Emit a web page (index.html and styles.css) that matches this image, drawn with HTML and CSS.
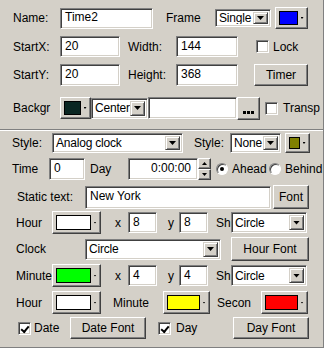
FILE: index.html
```html
<!DOCTYPE html>
<html lang="en">
<head>
  <meta charset="UTF-8">
  <title>Clock properties</title>
  <link rel="stylesheet" href="styles.css">
</head>
<body>
  <div class="panel">
    <div class="row r1">
      <span class="lbl w47">Name:</span>
      <div class="edit sunken w93">Time2</div>
      <span class="lbl ml13 w49">Frame</span>
      <div class="combo sunken w56 h18"><span class="val">Single</span><span class="drop"></span></div>
      <div class="cbtn raised ml4 w33 h22"><span class="swatch blue"></span><span class="arr"></span></div>
    </div>

    <div class="row r2">
      <span class="lbl w47">StartX:</span>
      <div class="edit sunken w60">20</div>
      <span class="lbl ml8 w48">Width:</span>
      <div class="edit sunken w62">144</div>
      <span class="check sunken ml18"></span>
      <span class="lbl ml4">Lock</span>
    </div>

    <div class="row r3">
      <span class="lbl w47">StartY:</span>
      <div class="edit sunken w60 h22">20</div>
      <span class="lbl ml8 w48">Height:</span>
      <div class="edit sunken w62 h22">368</div>
      <div class="btn raised ml16 w54 h22">Timer</div>
    </div>

    <div class="row r4">
      <span class="lbl clip w39">Backgr</span>
      <div class="cbtn raised ml8 w31 h22"><span class="swatch dark"></span><span class="arr"></span></div>
      <div class="combo sunken w57"><span class="val">Center</span><span class="drop"></span></div>
      <div class="edit sunken w89 h22"></div>
      <div class="btn raised dots w23 h23">
        <svg width="11" height="3" viewBox="0 0 11 3"><rect x="0" y="0" width="3" height="3"/><rect x="4" y="0" width="3" height="3"/><rect x="8" y="0" width="3" height="3"/></svg>
      </div>
      <span class="check sunken ml5"></span>
      <span class="lbl ml5">Transp</span>
    </div>

    <div class="sep"></div>

    <div class="row r5">
      <span class="lbl w40">Style:</span>
      <div class="combo sunken w131 h20"><span class="val">Analog clock</span><span class="drop"></span></div>
      <span class="lbl ml11 w36">Style:</span>
      <div class="combo sunken w51 h20"><span class="val">None</span><span class="drop"></span></div>
      <div class="cbtn raised ml4 w25 h20"><span class="swatch olive"></span><span class="arr"></span></div>
    </div>

    <div class="row r6">
      <span class="lbl w37">Time</span>
      <div class="edit sunken w36 h22">0</div>
      <span class="lbl ml5 w38">Day</span>
      <div class="edit sunken w70 h22 right">0:00:00</div>
      <div class="spin">
        <span class="raised up"></span>
        <span class="raised down"></span>
      </div>
      <span class="radio on ml5"></span>
      <span class="lbl ml4 w33">Ahead</span>
      <span class="radio ml4"></span>
      <span class="lbl ml4">Behind</span>
    </div>

    <div class="row r7">
      <span class="lbl w68">Static text:</span>
      <div class="edit sunken w186 h23">New York</div>
      <div class="btn raised ml2 w36 h24">Font</div>
    </div>

    <div class="row r8">
      <span class="lbl w36">Hour</span>
      <div class="cbtn raised w49 h23"><span class="swatch white"></span><span class="arr"></span></div>
      <span class="lbl ml14 w13">x</span>
      <div class="edit sunken w29">8</div>
      <span class="lbl ml11 w11">y</span>
      <div class="edit sunken w29">8</div>
      <span class="lbl ml8 w15">Sh</span>
      <div class="combo sunken w76"><span class="val">Circle</span><span class="drop"></span></div>
    </div>

    <div class="row r9">
      <span class="lbl w69">Clock</span>
      <div class="combo sunken w136"><span class="val">Circle</span><span class="drop"></span></div>
      <div class="btn raised ml10 w78 h24">Hour Font</div>
    </div>

    <div class="row r10">
      <span class="lbl w36">Minute</span>
      <div class="cbtn raised w49 h23"><span class="swatch green"></span><span class="arr"></span></div>
      <span class="lbl ml14 w13">x</span>
      <div class="edit sunken w29">4</div>
      <span class="lbl ml11 w11">y</span>
      <div class="edit sunken w29">4</div>
      <span class="lbl ml8 w15">Sh</span>
      <div class="combo sunken w76"><span class="val">Circle</span><span class="drop"></span></div>
    </div>

    <div class="row r11">
      <span class="lbl w36">Hour</span>
      <div class="cbtn raised w49 h23"><span class="swatch white"></span><span class="arr"></span></div>
      <span class="lbl ml12 w50">Minute</span>
      <div class="cbtn raised w47 h23"><span class="swatch yellow"></span><span class="arr"></span></div>
      <span class="lbl clip ml7 w35">Secon</span>
      <div class="cbtn raised ml9 w47 h23"><span class="swatch red"></span><span class="arr"></span></div>
    </div>

    <div class="row r12">
      <span class="check sunken on"></span>
      <span class="lbl ml3 w36">Date</span>
      <div class="btn raised w76 h22">Date Font</div>
      <span class="check sunken on ml12"></span>
      <span class="lbl ml5 w57">Day</span>
      <div class="btn raised w76 h22">Day Font</div>
    </div>
  </div>
</body>
</html>
```

FILE: styles.css
```css
* {
  box-sizing: border-box;
}
body {
  margin: 0;
  background: #fff;
  font-family: 'Liberation Sans', Arial, sans-serif;
  font-size: 12px;
  color: #000;
}
.panel {
  width: 324px;
  height: 348px;
  background: #d4d0c8;
  border-right: 1px solid #808080;
  border-bottom: 1px solid #808080;
  overflow: hidden;
}

/* rows */
.row {
  display: flex;
  align-items: center;
  white-space: nowrap;
}
.r1 { margin-top: 7px; height: 22px; padding-left: 13px; }
.r2 { margin-top: 7px; height: 21px; padding-left: 13px; }
.r3 { margin-top: 7px; height: 22px; padding-left: 13px; }
.r4 { margin-top: 11px; height: 22px; padding-left: 13px; }
.r5 { margin-top: 2px; height: 20px; padding-left: 12px; }
.r6 { margin-top: 5px; height: 22px; padding-left: 12px; }
.r7 { margin-top: 5px; height: 24px; padding-left: 17px; }
.r8 { margin-top: 2px; height: 23px; padding-left: 16px; }
.r9 { margin-top: 3px; height: 24px; padding-left: 16px; }
.r10 { margin-top: 3px; height: 23px; padding-left: 16px; }
.r11 { margin-top: 4px; height: 23px; padding-left: 16px; }
.r12 { margin-top: 3px; height: 22px; padding-left: 18px; }

.sep {
  margin-top: 10px;
  height: 2px;
  border-top: 1px solid #808080;
  border-bottom: 1px solid #fff;
}

/* sizes */
.w11 { width: 11px; } .w13 { width: 13px; } .w15 { width: 15px; }
.w23 { width: 23px; } .w25 { width: 25px; } .w29 { width: 29px; }
.w31 { width: 31px; } .w33 { width: 33px; } .w35 { width: 35px; }
.w36 { width: 36px; } .w37 { width: 37px; } .w38 { width: 38px; }
.w39 { width: 39px; } .w40 { width: 40px; } .w47 { width: 47px; }
.w48 { width: 48px; } .w49 { width: 49px; } .w50 { width: 50px; }
.w51 { width: 51px; } .w54 { width: 54px; } .w56 { width: 56px; }
.w57 { width: 57px; } .w60 { width: 60px; } .w62 { width: 62px; }
.w68 { width: 68px; } .w69 { width: 69px; } .w70 { width: 70px; }
.w76 { width: 76px; } .w78 { width: 78px; } .w89 { width: 89px; }
.w93 { width: 93px; } .w131 { width: 131px; } .w136 { width: 136px; }
.w186 { width: 186px; }
.h18 { height: 18px !important; } .h20 { height: 20px !important; }
.h22 { height: 22px !important; } .h23 { height: 23px !important; }
.h24 { height: 24px !important; }
.ml2 { margin-left: 2px; } .ml3 { margin-left: 3px; }
.ml4 { margin-left: 4px; } .ml5 { margin-left: 5px; }
.ml7 { margin-left: 7px; } .ml8 { margin-left: 8px; } .ml9 { margin-left: 9px; }
.ml10 { margin-left: 10px; } .ml11 { margin-left: 11px; } .ml12 { margin-left: 12px; }
.ml13 { margin-left: 13px; } .ml14 { margin-left: 14px; } .ml16 { margin-left: 16px; }
.ml18 { margin-left: 18px; }

/* controls */
.lbl {
  flex: none;
}
.clip {
  overflow: hidden;
}
.sunken {
  background: #fff;
  border: 1px solid;
  border-color: #808080 #fff #fff #808080;
  box-shadow: inset 1px 1px #404040, inset -1px -1px #d4d0c8;
}
.raised {
  background: #d4d0c8;
  border: 1px solid;
  border-color: #fff #404040 #404040 #fff;
  box-shadow: inset -1px -1px #808080;
}
.edit {
  flex: none;
  height: 21px;
  display: flex;
  align-items: center;
  padding: 0 3px 2px 4px;
}
.edit.right {
  justify-content: flex-end;
  padding-right: 6px;
}
.combo {
  flex: none;
  height: 21px;
  display: flex;
  align-items: stretch;
  padding: 2px;
}
.combo .val {
  flex: 1;
  display: flex;
  align-items: center;
  padding-left: 1px;
  overflow: hidden;
  letter-spacing: -0.2px;
}
.drop {
  width: 15px;
  flex: none;
  display: flex;
  align-items: center;
  justify-content: center;
  background: #d4d0c8;
  border: 1px solid;
  border-color: #d4d0c8 #404040 #404040 #d4d0c8;
  box-shadow: inset 1px 1px #fff, inset -1px -1px #808080;
}
.drop::after {
  content: "";
  width: 7px;
  height: 4px;
  background: #000;
  clip-path: polygon(0 0, 100% 0, 50% 100%);
}
.btn {
  flex: none;
  display: flex;
  align-items: center;
  justify-content: center;
}
.dots {
  align-items: flex-end;
  padding-bottom: 5px;
}
.cbtn {
  flex: none;
  display: flex;
  align-items: stretch;
  padding: 3px 2px 3px 3px;
}
.swatch {
  flex: 1;
  border: 1px solid #000;
}
.arr {
  width: 6px;
  flex: none;
  display: flex;
  align-items: center;
  justify-content: center;
  margin-left: 1px;
}
.arr::after {
  content: "";
  width: 3px;
  height: 2px;
  background: #000;
  clip-path: polygon(0 0, 100% 0, 50% 100%);
}
.blue { background: #0000ff; }
.dark { background: #0a2622; }
.olive { background: #808000; }
.white { background: #fff; }
.green { background: #00ff00; }
.yellow { background: #ffff00; }
.red { background: #ff0000; }

.check {
  flex: none;
  width: 13px;
  height: 13px;
  position: relative;
}
.check.on::after {
  content: "";
  position: absolute;
  left: 2px;
  top: 1px;
  width: 6px;
  height: 3px;
  border-left: 2px solid #000;
  border-bottom: 2px solid #000;
  transform: translate(0, 2px) rotate(-50deg);
}
.radio {
  flex: none;
  width: 12px;
  height: 12px;
  border-radius: 50%;
  background: #fff;
  border: 1px solid;
  border-color: #808080 #fff #fff #808080;
  box-shadow: inset 1px 1px #404040;
  display: flex;
  align-items: center;
  justify-content: center;
}
.radio.on::after {
  content: "";
  width: 4px;
  height: 4px;
  border-radius: 50%;
  background: #000;
}
.spin {
  flex: none;
  width: 13px;
  height: 22px;
  display: flex;
  flex-direction: column;
}
.spin span {
  flex: 1;
  display: flex;
  align-items: center;
  justify-content: center;
}
.spin .up::after,
.spin .down::after {
  content: "";
  width: 5px;
  height: 3px;
  background: #000;
}
.spin .up::after { clip-path: polygon(50% 0, 100% 100%, 0 100%); }
.spin .down::after { clip-path: polygon(0 0, 100% 0, 50% 100%); }
```
